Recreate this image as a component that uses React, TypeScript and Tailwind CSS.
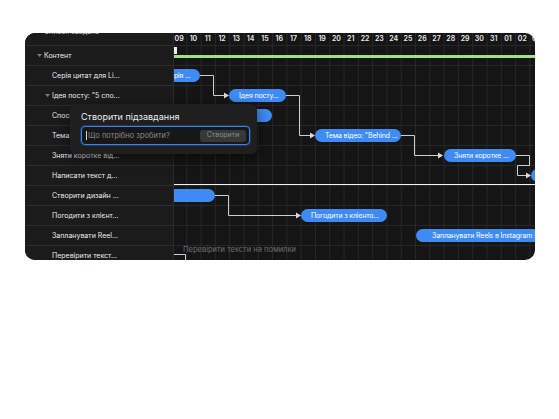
import React from "react"

type Row = {
  label: string
  level: 0 | 1 | 2
  open?: boolean
}

type Bar = {
  row: number
  left: number
  width: number
  text: string
  pad?: number
}

const rows: Row[] = [
  { label: "Контент", level: 0, open: true },
  { label: "Серія цитат для Li...", level: 2 },
  { label: "Ідея посту: \"5 спо...", level: 1, open: true },
  { label: "Способи генерації...", level: 2 },
  { label: "Тема відео: \"Behi...", level: 2 },
  { label: "Зняти коротке від...", level: 2 },
  { label: "Написати текст д...", level: 2 },
  { label: "Створити дизайн ...", level: 2 },
  { label: "Погодити з клієнт...", level: 2 },
  { label: "Запланувати Reel...", level: 2 },
  { label: "Перевірити текст...", level: 2 },
]

const days = [
  "09", "10", "11", "12", "13", "14", "15", "16", "17", "18", "19", "20", "21",
  "22", "23", "24", "25", "26", "27", "28", "29", "30", "31", "01", "02", "03",
]

// left/width in px from the visible timeline edge
const bars: Bar[] = [
  { row: 1, left: -19, width: 45, text: "Серія ..." },
  { row: 2, left: 55, width: 57, text: "Ідея посту..." },
  { row: 3, left: 30, width: 68, text: "Способи ..." },
  { row: 4, left: 141, width: 86, text: "Тема відео: \"Behind ..." },
  { row: 5, left: 270, width: 72, text: "Зняти коротке ..." },
  { row: 6, left: 357, width: 100, text: "Написати текст ..." },
  { row: 7, left: -100, width: 141, text: "Створити дизайн" },
  { row: 8, left: 127, width: 86, text: "Погодити з клієнто..." },
  { row: 9, left: 242, width: 140, text: "Запланувати Reels в Instagram — ...", pad: 16 },
]

function Chevron() {
  return (
    <svg width="5" height="3" viewBox="0 0 5 3" className="shrink-0">
      <path d="M0 0h5L2.5 3z" fill="#7b7b7b" />
    </svg>
  )
}

function Sidebar() {
  return (
    <div className="w-[149px] shrink-0 border-r border-[#2a2a2a] bg-[#1b1b1b] text-[7px] text-[#ebebeb]">
      <div className="h-[20px] pl-[19px] pt-[3px] leading-[8px] text-[#d4d4d4]">Список завдань</div>
      {rows.map((r, i) => (
        <div
          key={i}
          className={`flex h-[20px] items-center gap-[2px] border-t border-[#2d2d2d] ${
            r.level === 0 ? "pl-[12px]" : r.open ? "pl-[20px]" : "pl-[27px]"
          }`}
        >
          {r.open && <Chevron />}
          <span className="w-[76px] overflow-hidden whitespace-nowrap leading-[8px]">{r.label}</span>
        </div>
      ))}
    </div>
  )
}

function Arrow({ d, tipX, tipY }: { d: string; tipX: number; tipY: number }) {
  return (
    <>
      <path d={d} fill="none" stroke="#cfcfcf" strokeWidth="1" />
      <path d={`M${tipX} ${tipY}L${tipX - 5} ${tipY - 3}L${tipX - 5} ${tipY + 3}Z`} fill="#d9d9d9" />
    </>
  )
}

function Timeline() {
  return (
    <div className="relative flex-1 overflow-hidden [background-image:linear-gradient(to_right,#272727_1px,transparent_1px),linear-gradient(to_bottom,#272727_1px,transparent_1px)] [background-position:12.3px_0] [background-size:14.3px_20px]">
      {/* Day header */}
      <div className="-ml-[2px] flex h-[20px] items-end pb-[2px]">
        {days.map((d) => (
          <span key={d} className="w-[14.3px] shrink-0 text-center text-[7px] font-semibold leading-[8px] text-[#ececec]">
            {d}
          </span>
        ))}
      </div>

      {rows.map((_, i) => (
        <div key={i} className="relative h-[20px]">
          {i === 0 && (
            <>
              <div className="absolute left-0 top-[2px] h-[7px] w-[3px] bg-[#eeeeee]" />
              <div className="absolute left-0 right-0 top-[10px] h-[3px] bg-[#9fe186]" />
            </>
          )}
          {i === 10 && (
            <span className="absolute left-[9px] top-[1px] whitespace-nowrap text-[7.5px] leading-[8px] text-[#6f6f6f]">
              Перевірити тексти на помилки
            </span>
          )}
          {bars
            .filter((b) => b.row === i)
            .map((b) => (
              <div
                key={b.text}
                className="absolute top-[4px] h-[13px] overflow-hidden whitespace-nowrap rounded-full bg-[#3f8bf6] text-[7px] leading-[13px] tracking-[-0.15px] text-white"
                style={{ left: b.left, width: b.width, paddingLeft: b.pad ?? 10 }}
              >
                {b.text}
              </div>
            ))}
        </div>
      ))}

      {/* Dependency links */}
      <svg className="pointer-events-none absolute left-0 top-0" width="400" height="240">
        <Arrow d="M26 50.5H39.5V70.5H51" tipX={55} tipY={70.5} />
        <Arrow d="M112 70.5H125.5V110.5H137" tipX={141} tipY={110.5} />
        <Arrow d="M227 110.5H240.5V130.5H266" tipX={269} tipY={130.5} />
        <Arrow d="M342 130.5H355.5V140.5H343.5V150.5H353" tipX={357} tipY={150.5} />
        <Arrow d="M41 170.5H54.5V190.5H123" tipX={127} tipY={190.5} />
        <path d="M-1 229.5H11.5V240" fill="none" stroke="#cfcfcf" strokeWidth="1" />
        <path d="M0 159.5H400" stroke="#f2f2f2" strokeWidth="1" />
      </svg>
    </div>
  )
}

function SubtaskPopup() {
  return (
    <div className="absolute left-[45px] top-[71px] h-[50px] w-[187px] rounded-[6px] bg-[#1f1f1f] px-[11px] pt-[7px] shadow-[0_4px_14px_rgba(0,0,0,0.55)]">
      <div className="text-[9px] leading-[11px] text-[#ededed]">Створити підзавдання</div>
      <div className="mt-[4px] flex h-[19px] w-[169px] items-center rounded-[4px] border border-[#3b82f6] bg-[#171717] pl-[4px] pr-[3px] shadow-[0_0_0_1px_rgba(59,130,246,0.25)]">
        <span className="h-[9px] w-px bg-[#d6d6d6]" />
        <span className="ml-px flex-1 whitespace-nowrap text-[7.5px] text-[#8a8a8a]">Що потрібно зробити?</span>
        <span className="flex h-[12px] w-[46px] items-center justify-center rounded-[3px] bg-[#383838] text-[7px] text-[#8e8e8e]">
          Створити
        </span>
      </div>
    </div>
  )
}

export default function App() {
  return (
    <div className="h-[419px] w-[559px] bg-white pl-[25px] pt-[33px] font-['Inter',sans-serif]">
      <div className="relative flex h-[227px] w-[510px] overflow-hidden rounded-[10px] bg-[#151515]">
        <div className="-mt-[8px] flex h-[240px] w-full">
          <Sidebar />
          <Timeline />
        </div>
        <SubtaskPopup />
      </div>
    </div>
  )
}
